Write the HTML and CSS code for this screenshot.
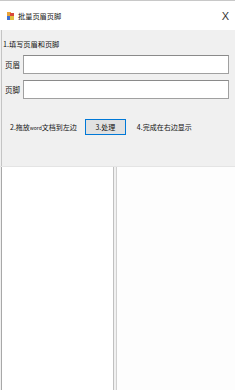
FILE: index.html
```html
<!DOCTYPE html>
<html lang="zh-CN">
<head>
    <meta charset="UTF-8">
    <meta name="viewport" content="width=device-width, initial-scale=1.0">
    <title>批量页眉页脚</title>
    <link rel="stylesheet" href="styles.css">
</head>
<body>
    <div class="window">
        <div class="titlebar">
            <svg class="app-icon" width="7" height="8" viewBox="0 0 7 8">
                <rect x="0" y="0" width="4" height="4" fill="#e8a33a"/>
                <rect x="3" y="1" width="4" height="3" fill="#d9473a"/>
                <rect x="0" y="4" width="4" height="4" fill="#3f6fd0"/>
                <rect x="3" y="4" width="4" height="4" fill="#e0c040"/>
            </svg>
            <span class="title">批量页眉页脚</span>
            <span class="close">X</span>
        </div>

        <div class="form">
            <div class="step">1.填写页眉和页脚</div>
            <div class="field">
                <label>页眉</label>
                <input type="text">
            </div>
            <div class="field">
                <label>页脚</label>
                <input type="text">
            </div>
            <div class="actions">
                <span class="hint">2.拖放<span class="latin">word</span>文档到左边</span>
                <button class="btn">3.处理</button>
                <span class="hint">4.完成在右边显示</span>
            </div>
        </div>

        <div class="panels">
            <div class="panel left"></div>
            <div class="panel right"></div>
        </div>
    </div>
</body>
</html>
```

FILE: styles.css
```css
body {
    margin: 0;
    font-family: "Noto Sans CJK SC", "Noto Sans", sans-serif;
    background: #f0f0f0;
    overflow: hidden;
}

.window {
    width: 235px;
    height: 390px;
    display: flex;
    flex-direction: column;
    border-top: 1px solid #c8c8c8;
    box-sizing: border-box;
}

.titlebar {
    height: 29px;
    background: #fff;
    display: flex;
    align-items: center;
    padding: 0 6px 0 7px;
    flex-shrink: 0;
}

.app-icon {
    margin-right: 4px;
}

.title {
    font-size: 7.2px;
    color: #111;
}

.close {
    margin-left: auto;
    font-family: "Liberation Sans", sans-serif;
    font-size: 11px;
    color: #333;
}

.form {
    border-left: 1px solid #c4c4c4;
    margin-left: 1px;
    padding: 8px 6px 0 1px;
    flex-shrink: 0;
    height: 128px;
}

.step {
    font-size: 7.2px;
    line-height: 12px;
    color: #111;
    margin-bottom: 5px;
}

.field {
    display: flex;
    align-items: center;
    margin-bottom: 6px;
}

.field label {
    width: 18px;
    padding-left: 2px;
    font-size: 7.5px;
    color: #111;
}

.field input {
    flex: 1;
    height: 19px;
    box-sizing: border-box;
    border: 1px solid #a0a0a0;
    border-top-color: #8a8a8a;
    background: #fff;
    margin: 0;
    padding: 0;
}

.actions {
    display: flex;
    align-items: center;
    margin-top: 20px;
    padding-left: 7px;
}

.hint {
    font-size: 7px;
    color: #111;
}

.latin {
    font-size: 5px;
}

.btn {
    width: 41px;
    height: 16px;
    margin: 0 11px 0 8px;
    padding: 0;
    background: #e1e1e1;
    border: 1px solid #0078d7;
    font-family: inherit;
    font-size: 7px;
    color: #111;
}

.panels {
    flex: 1;
    display: flex;
    gap: 2px;
    padding-left: 1px;
    border-top: 1px solid #e4e4e4;
}

.panel {
    background: #fff;
}

.left {
    width: 111px;
    border-left: 1px solid #a8a8a8;
    border-right: 1px solid #c0c0c0;
}

.right {
    flex: 1;
    border-left: 1px solid #d0d0d0;
    background: #fdfdfd;
}
```
